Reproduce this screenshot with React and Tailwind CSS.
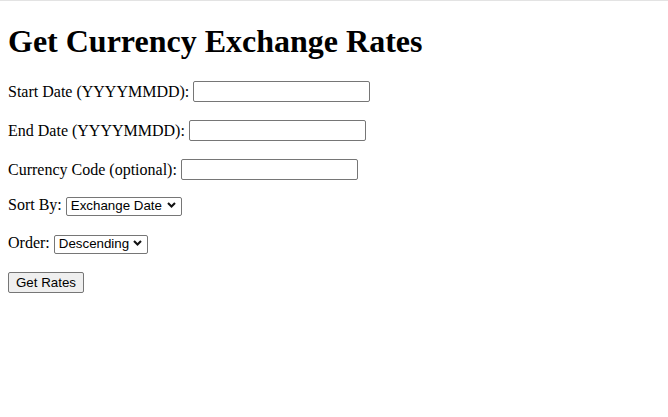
import React from "react";

const Chevron = () => (
  <svg
    className="pointer-events-none absolute right-[6px] top-1/2 -translate-y-1/2"
    width="9"
    height="7"
    viewBox="0 0 9 7"
  >
    <path d="M1 1.6l3.5 3.4L8 1.6" fill="none" stroke="#111" strokeWidth="2.1" />
  </svg>
);

const TextField = ({ label, className = "" }) => (
  <div className={`flex h-[21px] items-center gap-1 ${className}`}>
    <span className="text-[16px] leading-[normal]">{label}</span>
    <input
      type="text"
      className="h-[21px] w-[177px] rounded-[2px] border border-[#767676] bg-white px-[2px] text-[13.33px] outline-none"
      style={{ fontFamily: '"Liberation Sans", Arial, sans-serif' }}
    />
  </div>
);

const SelectField = ({ label, width, options, className = "" }) => (
  <div className={`flex h-[19px] items-end gap-1 ${className}`}>
    <span className="mb-[3px] text-[16px] leading-[normal]">{label}</span>
    <div className={`relative ${width}`}>
      <select
        className="h-[19px] w-full appearance-none rounded-[2px] border border-[#767676] bg-white pl-[4px] pr-[16px] text-[13.33px] leading-[16px] text-black outline-none"
        style={{ fontFamily: '"Liberation Sans", Arial, sans-serif' }}
      >
        {options.map((o) => (
          <option key={o}>{o}</option>
        ))}
      </select>
      <Chevron />
    </div>
  </div>
);

const App = () => {
  return (
    <div
      className="min-h-[417px] w-full border-t border-[#e3e3e3] bg-white px-2 text-black"
      style={{ fontFamily: '"Liberation Serif", "Times New Roman", serif' }}
    >
      <h1 className="mt-[22px] text-[32px] font-bold leading-[37px]">
        Get Currency Exchange Rates
      </h1>
      <form className="mt-[21px] flex flex-col items-start">
        <TextField label="Start Date (YYYYMMDD):" />
        <TextField label="End Date (YYYYMMDD):" className="mt-[18px]" />
        <TextField label="Currency Code (optional):" className="mt-[18px]" />
        {/* ::sort */}
        <SelectField
          label="Sort By:"
          width="w-[116px]"
          className="mt-[18px]"
          options={["Exchange Date", "Currency Code", "Rate"]}
        />
        <SelectField
          label="Order:"
          width="w-[94px]"
          className="mt-[19px]"
          options={["Descending", "Ascending"]}
        />
        <button
          type="button"
          className="mt-[17px] h-[21px] rounded-[2px] border border-[#767676] bg-[#efefef] px-[7px] text-[13.33px] leading-[17px] text-black"
          style={{ fontFamily: '"Liberation Sans", Arial, sans-serif' }}
        >
          Get Rates
        </button>
      </form>
    </div>
  );
};

export default App;
